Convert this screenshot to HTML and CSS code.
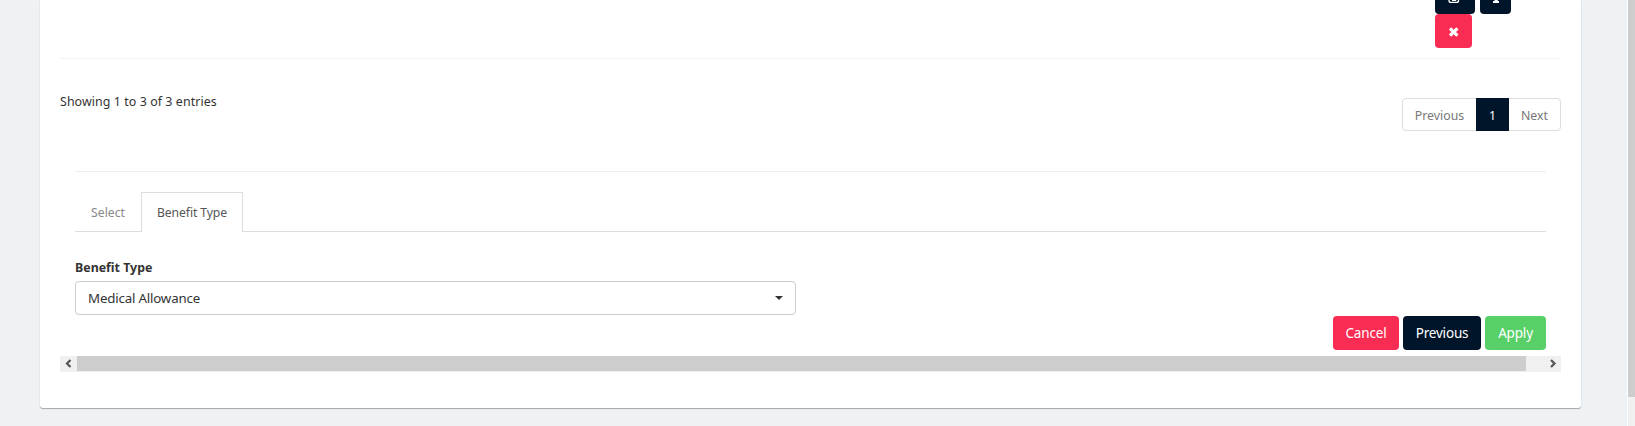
FILE: index.html
```
<!DOCTYPE html>
<html lang="en">
<head>
<meta charset="utf-8">
<title>Benefits</title>
<link rel="stylesheet" href="styles.css">
</head>
<body>
<div class="page">
  <main class="card">
    <div class="table-row">
      <div class="row-actions">
        <button class="btn icon-btn edit"><svg width="14" height="14" viewBox="0 0 14 14"><path d="M2 2v8.4a2 2 0 0 0 2 2h5.5a2 2 0 0 0 2-2V2M5 10.3h3.5V6" fill="none" stroke="#fff" stroke-width="1.3"/></svg></button>
        <button class="btn icon-btn info"><svg width="14" height="14" viewBox="0 0 14 14"><path d="M5 5h3.8v6H10v2H4v-2h1.6V7H5z" fill="#fff"/></svg></button>
        <button class="btn icon-btn remove"><svg width="14" height="14" viewBox="0 0 14 14"><path d="M3 4.3l7.4 7.4M10.4 4.3L3 11.7" fill="none" stroke="#fff" stroke-width="3.3"/></svg></button>
      </div>
    </div>
    <div class="table-footer">
      <span class="summary">Showing 1 to 3 of 3 entries</span>
      <nav class="pagination"><a class="prev">Previous</a><a class="current">1</a><a class="next">Next</a></nav>
    </div>
    <section class="form">
      <div class="tabs"><a class="tab">Select</a><a class="tab active">Benefit Type</a></div>
      <label class="label">Benefit Type</label>
      <div class="select"><span>Medical Allowance</span><i class="caret"></i></div>
      <div class="actions">
        <button class="btn cancel">Cancel</button>
        <button class="btn previous">Previous</button>
        <button class="btn apply">Apply</button>
      </div>
    </section>
    <div class="hscroll">
      <svg class="arrow" width="17" height="16" viewBox="0 0 17 16"><path d="M10.5 4L7 7.5l3.5 3.5" fill="none" stroke="#555" stroke-width="2.2"/></svg>
      <div class="track"><div class="thumb"></div></div>
      <svg class="arrow" width="17" height="16" viewBox="0 0 17 16"><path d="M7 4l3.5 3.5L7 11" fill="none" stroke="#555" stroke-width="2.2"/></svg>
    </div>
  </main>
  <div class="vscroll"><div class="vthumb"></div></div>
</div>
</body>
</html>
```
FILE: styles.css
```
* { box-sizing: border-box; }
body {
  margin: 0;
  background: #eef2f5;
  color: #333;
  font: 13px/18px "Noto Sans", "Open Sans", sans-serif;
}
.page { display: flex; justify-content: space-between; height: 426px; overflow: hidden; }
.card {
  width: 1541px;
  height: 408px;
  margin-left: 40px;
  padding: 0 20px;
  background: #fff;
  border-radius: 0 0 3px 3px;
  box-shadow: 0 1px 1px rgba(0, 0, 0, .3), 0 0 1px rgba(0, 0, 0, .15);
}
.table-row { height: 59px; border-bottom: 1px solid #f4f4f4; display: flex; justify-content: flex-end; }
.row-actions { display: flex; flex-wrap: wrap; align-content: flex-start; column-gap: 5px; width: 126px; margin-top: -20px; }
.btn {
  height: 34px;
  padding: 0;
  border: 0;
  border-radius: 4px;
  background: #001529;
  color: #fff;
  font: 13.5px/34px "Noto Sans", "Open Sans", sans-serif;
  letter-spacing: -.18px;
  white-space: nowrap;
}
.icon-btn { display: flex; align-items: center; justify-content: center; }
.edit { width: 40px; }
.info { width: 31px; margin-right: 20px; }
.edit svg { margin-right: 2px; }
.remove { width: 37px; background: #f92c54; }
.table-footer { display: flex; justify-content: space-between; align-items: flex-start; height: 112px; padding-top: 39px; }
.summary { margin-top: -5px; font-size: 12.4px; letter-spacing: .08px; }
.pagination { display: flex; width: 159px; height: 33px; border: 1px solid #ddd; border-radius: 4px; color: #777; font-size: 12.3px; line-height: 33px; text-align: center; }
.prev { width: 73px; }
.current { width: 33px; height: 33px; margin-top: -1px; background: #001529; color: #fff; line-height: 35px; }
.next { width: 51px; }
.form { height: 185px; margin: 0 15px; border-top: 1px solid #eee; padding-top: 20px; }
.tabs { display: flex; height: 40px; border-bottom: 1px solid #ddd; font-size: 12.2px; line-height: 40px; text-align: center; }
.tab { width: 66px; color: #888; line-height: 42px; }
.tab.active { width: 102px; height: 40px; border: 1px solid #ddd; border-bottom: 0; background: #fff; color: #555; line-height: 40px; letter-spacing: -.1px; }
.label { display: block; margin-top: 26px; height: 23px; font-weight: 700; font-size: 12.4px; line-height: 20px; }
.select { display: flex; justify-content: space-between; align-items: center; width: 721px; height: 34px; padding: 0 12px; border: 1px solid #ccc; border-radius: 4px; font-size: 13.3px; letter-spacing: -.18px; }
.caret { border: 4px solid transparent; border-top-color: #333; border-bottom: 0; }
.actions { display: flex; justify-content: flex-end; gap: 4px; margin-top: 1px; }
.cancel { width: 66px; background: #f92c54; }
.previous { width: 78px; }
.apply { width: 61px; background: #57d068; }
.hscroll { display: flex; height: 16px; background: #f0f0f0; }
.arrow { flex: none; }
.track { flex: 1; }
.thumb { width: 1449px; height: 15px; background: #cdcdcd; }
.vscroll { width: 8px; background: #f0f0f0; border-left: 1px solid #fff; }
.vthumb { height: 397px; background: #cdcdcd; }
```
